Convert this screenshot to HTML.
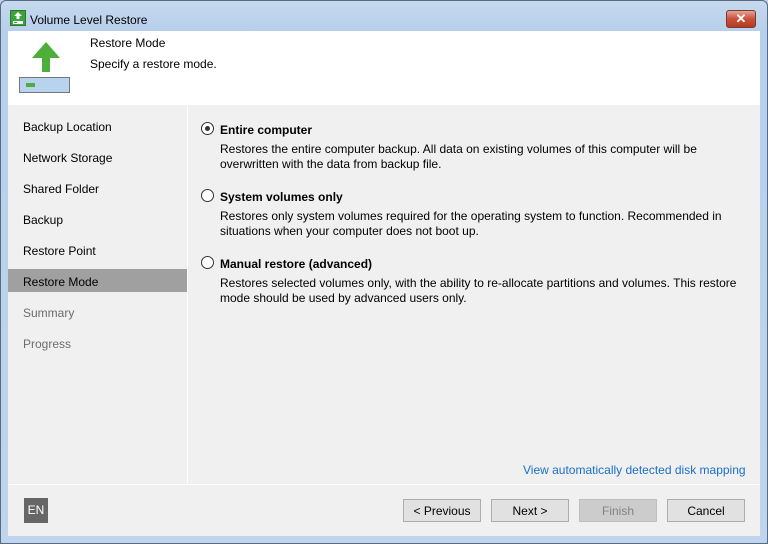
<!DOCTYPE html>
<html><head><style>
*{margin:0;padding:0;box-sizing:border-box}
body{width:768px;height:544px;overflow:hidden;font-family:"Liberation Sans",sans-serif;font-size:12px;color:#000;background:#bcd3ee;position:relative}
.frame{position:absolute;left:0;top:0;width:768px;height:544px;border:1px solid #5a6b80;border-radius:6px 6px 0 0;background:linear-gradient(#c6d9ef,#b7cfeb 30px,#bfd4ee)}
.abs{position:absolute}
.title{left:30px;top:13px;font-size:12px;color:#000}
.close{left:726px;top:10px;width:30px;height:18px;border:1px solid #7a3a2c;border-radius:3px;background:linear-gradient(#e6a394,#c9503a 50%,#b63a22);color:#fff;text-align:center;font-size:13px;font-weight:bold;line-height:16px}
.client{left:8px;top:31px;width:752px;height:505px;background:#f0f0f0}
.header{left:8px;top:31px;width:752px;height:74px;background:#fff}
.nav div{position:absolute;left:23px;font-size:12px}
.sel{left:8px;top:269px;width:179px;height:23px;background:#a0a0a0}
.vline{left:187px;top:105px;width:1px;height:379px;background:#fff}
.hline{left:8px;top:484px;width:752px;height:1px;background:#fff}
.rad{position:absolute;left:201px;width:13px;height:13px;border:1px solid #333;border-radius:50%;background:#fff}
.opt{position:absolute;left:220px;font-weight:bold}
.desc{position:absolute;left:220px;width:530px;line-height:15px}
.btn{position:absolute;top:499px;width:78px;height:23px;border:1px solid #adadad;background:#e1e1e1;text-align:center;line-height:22px}
</style></head><body>
<div class="frame"></div>
<svg class="abs" style="left:10px;top:10px" width="16" height="16"><rect x="0.5" y="0.5" width="15" height="15" fill="#3aa33c" stroke="#2a7a2c"/><path d="M8 2 L12 6 H9.5 V9 H6.5 V6 H4 Z" fill="#fff"/><rect x="3" y="11" width="10" height="3" fill="#fff"/><rect x="4" y="12" width="3" height="1" fill="#3aa33c"/></svg>
<div class="abs title">Volume Level Restore</div>
<div class="abs close">✕</div>
<div class="abs client"></div>
<div class="abs header"></div>
<svg class="abs" style="left:18px;top:40px" width="54" height="54"><path d="M28 2 L42 18 H32 V32 H24 V18 H14 Z" fill="#4caf3a"/><rect x="1.5" y="37.5" width="50" height="15" fill="#b8d3ee" stroke="#777"/><rect x="8" y="43" width="9" height="4" fill="#4caf3a"/></svg>
<div class="abs" style="left:90px;top:36px">Restore Mode</div>
<div class="abs" style="left:90px;top:57px">Specify a restore mode.</div>
<div class="abs sel"></div>
<div class="nav">
<div style="top:120px">Backup Location</div>
<div style="top:151px">Network Storage</div>
<div style="top:182px">Shared Folder</div>
<div style="top:213px">Backup</div>
<div style="top:244px">Restore Point</div>
<div style="top:275px">Restore Mode</div>
<div style="top:306px;color:#6d6d6d">Summary</div>
<div style="top:337px;color:#6d6d6d">Progress</div>
</div>
<div class="abs vline"></div>
<div class="abs hline"></div>
<div class="rad" style="top:122px"><div style="position:absolute;left:3px;top:3px;width:5px;height:5px;border-radius:50%;background:#333"></div></div>
<div class="opt" style="top:123px">Entire computer</div>
<div class="desc" style="top:142px">Restores the entire computer backup. All data on existing volumes of this computer will be overwritten with the data from backup file.</div>
<div class="rad" style="top:189px"></div>
<div class="opt" style="top:190px">System volumes only</div>
<div class="desc" style="top:209px">Restores only system volumes required for the operating system to function. Recommended in situations when your computer does not boot up.</div>
<div class="rad" style="top:256px"></div>
<div class="opt" style="top:257px">Manual restore (advanced)</div>
<div class="desc" style="top:276px">Restores selected volumes only, with the ability to re-allocate partitions and volumes. This restore mode should be used by advanced users only.</div>
<div class="abs" style="left:523px;top:463px;color:#1a6fc9">View automatically detected disk mapping</div>
<div class="abs" style="left:24px;top:498px;width:24px;height:25px;background:#666;color:#fff;text-align:center;line-height:25px">EN</div>
<div class="btn" style="left:403px">&lt; Previous</div>
<div class="btn" style="left:491px">Next &gt;</div>
<div class="btn" style="left:579px;background:#ccc;border-color:#bfbfbf;color:#838383">Finish</div>
<div class="btn" style="left:667px">Cancel</div>
</body></html>
